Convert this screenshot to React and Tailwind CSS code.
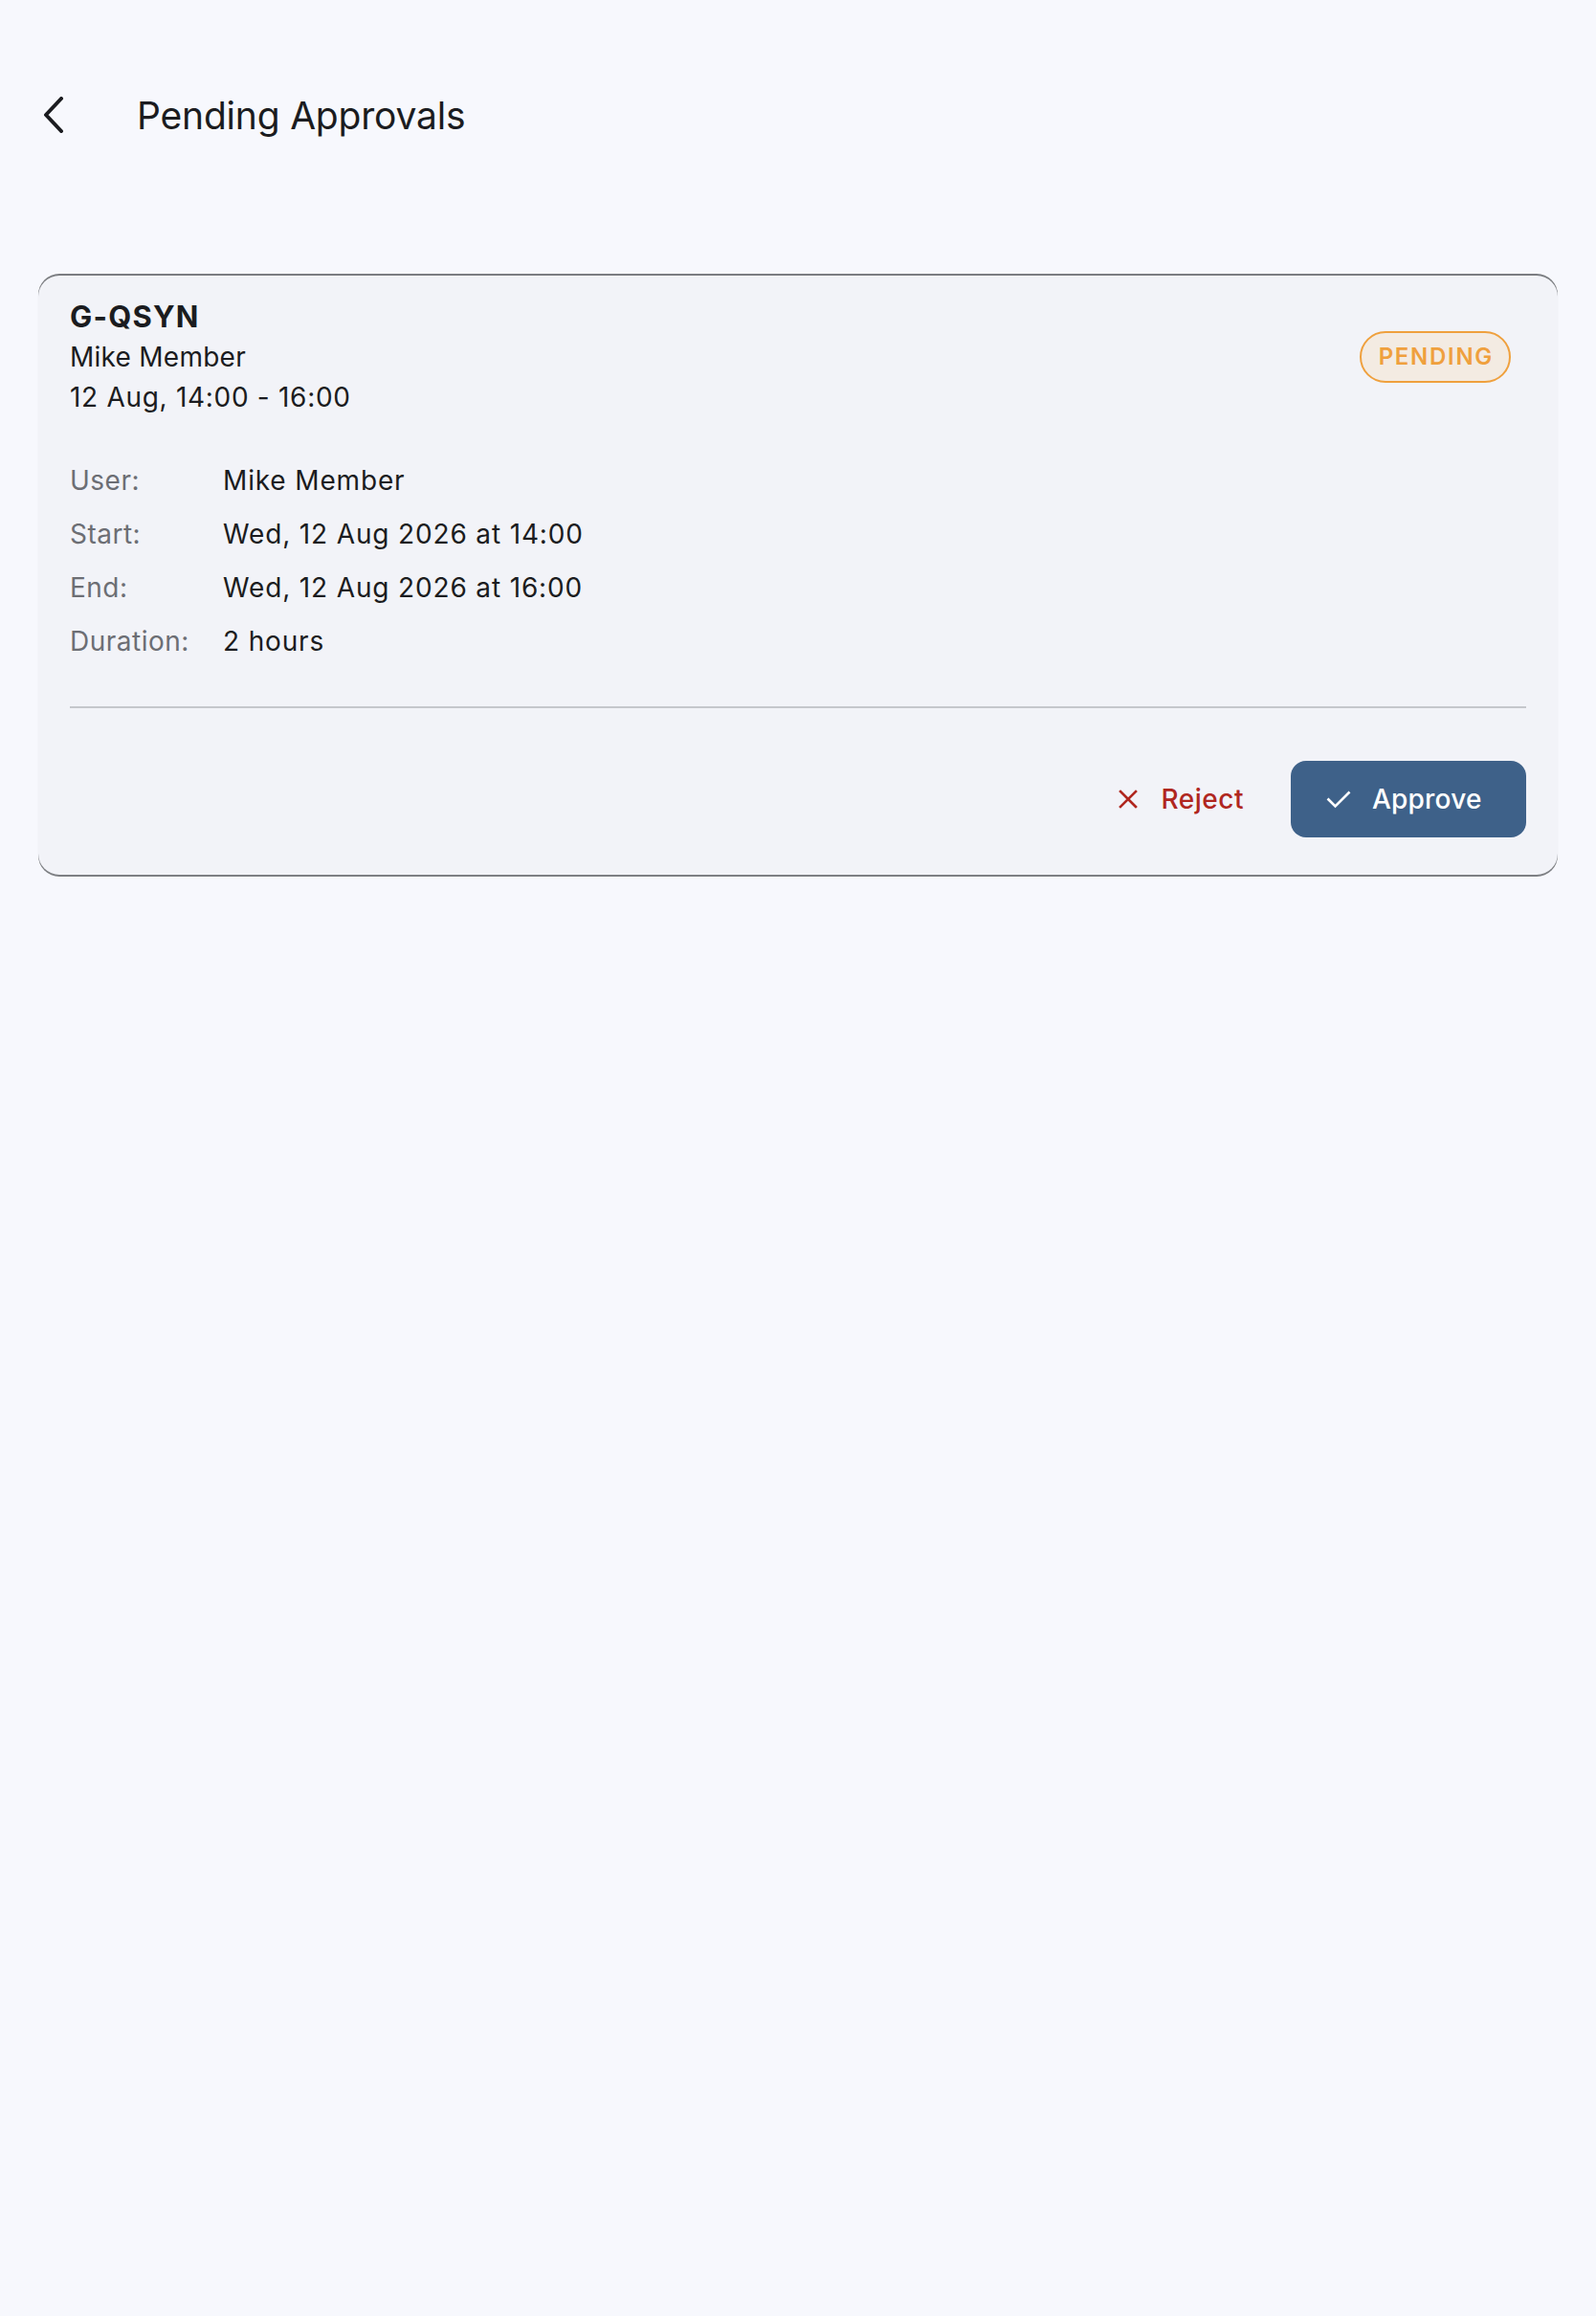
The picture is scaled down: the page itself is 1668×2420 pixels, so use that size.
const details = [
  { label: "User:", value: "Mike Member" },
  { label: "Start:", value: "Wed, 12 Aug 2026 at 14:00" },
  { label: "End:", value: "Wed, 12 Aug 2026 at 16:00" },
  { label: "Duration:", value: "2 hours" },
];

function BackArrow() {
  return (
    <svg width="22" height="38" viewBox="0 0 22 38" fill="none">
      <polyline
        points="19,2 3,19 19,36"
        stroke="#1b1c20"
        strokeWidth="4"
        strokeLinecap="round"
        strokeLinejoin="round"
      />
    </svg>
  );
}

function CrossIcon() {
  return (
    <svg width="20" height="20" viewBox="0 0 20 20" fill="none">
      <path d="M2 2L18 18M18 2L2 18" stroke="currentColor" strokeWidth="2.6" strokeLinecap="square" />
    </svg>
  );
}

function CheckIcon() {
  return (
    <svg width="26" height="20" viewBox="0 0 26 20" fill="none">
      <path d="M1.5 9.5L9.5 17.5L24.5 2.5" stroke="currentColor" strokeWidth="2.6" />
    </svg>
  );
}

function ApprovalCard() {
  return (
    <section className="mx-[40px] rounded-[22px] bg-[#f2f3f8] px-[33px] pt-[22px] pb-[39px] shadow-[0_-2px_0_#7b7d81,0_2px_0_#7d7f83,0_0_1px_rgba(0,0,0,0.12)]">
      <div className="flex items-center justify-between">
        <div>
          <h2 className="text-[31px] font-bold leading-[42px] tracking-[1.2px] text-[#1b1c20]">G-QSYN</h2>
          <p className="text-[28px] leading-[42px] tracking-[0.25px] text-[#1b1c20]">Mike Member</p>
          <p className="text-[28px] leading-[42px] tracking-[0.7px] text-[#1b1c20]">12 Aug, 14:00 - 16:00</p>
        </div>
        <span className="mr-[16px] flex h-[54px] items-center rounded-full border-2 border-[#efa03d] bg-[#f3ebe2] pl-[18px] pr-[16px] text-[24px] font-semibold tracking-[1.7px] text-[#efa03d]">
          PENDING
        </span>
      </div>

      <dl className="mt-[38px]">
        {details.map((row) => (
          <div className="flex h-[56px] items-center" key={row.label}>
            <dt className="w-[160px] text-[28px] tracking-[0.5px] text-[#6c6e74]">{row.label}</dt>
            <dd className="text-[28px] tracking-[0.85px] text-[#1b1c20]">{row.value}</dd>
          </div>
        ))}
      </dl>

      <div className="mt-[40px] h-[2px] bg-[#c5c7cc]" />

      <div className="mt-[55px] flex items-center justify-end">
        <button
          className="flex h-[80px] items-center gap-[25px] pr-[49px] text-[28px] font-medium tracking-[0.5px] text-[#b0271f]"
          type="button"
        >
          <CrossIcon />
          Reject
        </button>
        <button
          className="flex h-[80px] w-[246px] items-center gap-[22px] rounded-[16px] bg-[#3e6189] pl-[37px] text-[28px] font-medium tracking-[0.2px] text-white"
          type="button"
        >
          <CheckIcon />
          Approve
        </button>
      </div>
    </section>
  );
}

export default function App() {
  return (
    <div className="min-h-[2420px] bg-[#f7f8fd] pt-[96px] font-['Inter','Roboto',sans-serif]">
      <header className="flex h-[48px] items-center pl-[45px]">
        <BackArrow />
        <h1 className="ml-[76px] text-[39px] leading-none tracking-[-0.2px] text-[#1b1c20]">Pending Approvals</h1>
      </header>
      <div className="mt-[144px]">
        <ApprovalCard />
      </div>
    </div>
  );
}
